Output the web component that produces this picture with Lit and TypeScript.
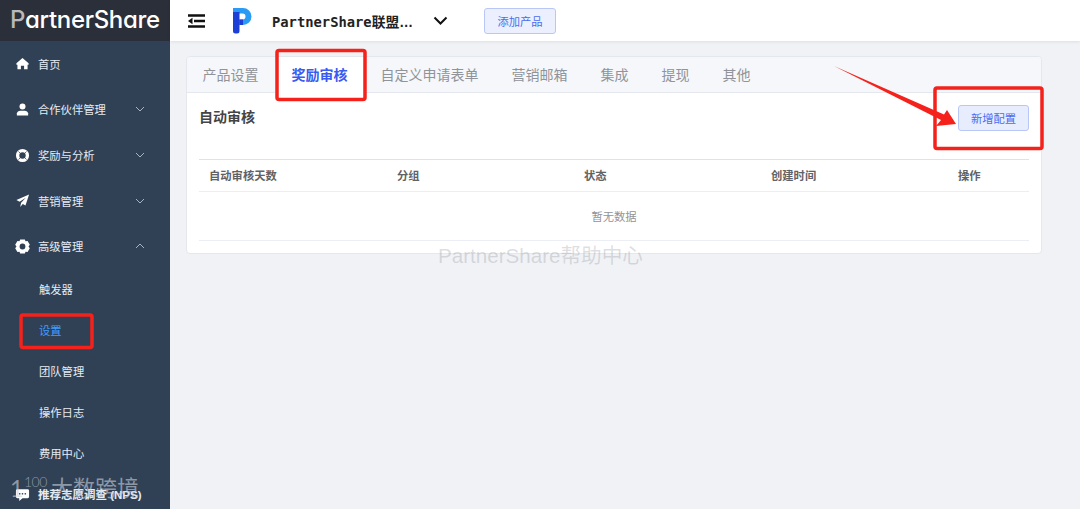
import { LitElement, html, css, svg } from "lit";
import { customElement } from "lit/decorators.js";

const icons: Record<string, unknown> = {
  home: svg`<path d="M8 2.200 1.500 7.800v1.400h1.100v4.800h3.700v-3.600h3.400V14h3.700V9.200h1.100V7.800z" fill="#fff"/>`,
  user: svg`<circle cx="8" cy="4.800" r="3.200" fill="#fff"/><path d="M2 14.500v-2.400C2 10.400 4 9.400 5.600 9.200h4.800c1.600.2 3.600 1.200 3.600 2.900v2.400z" fill="#fff"/>`,
  ring: svg`<circle cx="8" cy="8" r="5.200" fill="none" stroke="#fff" stroke-width="3.600"/><path d="M3.700 3.700l1.800 1.800M12.300 3.700l-1.800 1.800M3.700 12.300l1.800-1.800M12.300 12.300l-1.800-1.800" stroke="#304156" stroke-width=".8"/>`,
  plane: svg`<path d="M15 1.500 1.500 7.500l3.400 1.800L11.500 5 6.500 10.300 5.500 15l2.800-3.300 2.900 1.500z" fill="#fff"/>`,
  gear: svg`<path d="M5.500.5h5l.7 2 2.200-.4 2.400 4-1.400 1.900 1.400 1.900-2.400 4-2.200-.4-.7 2h-5l-.7-2-2.200.4-2.400-4L1.600 8 .2 6.100l2.400-4 2.200.4z" fill="#fff"/><circle cx="8" cy="8" r="3.100" fill="#304156"/>`,
  chat: svg`<path d="M2.500 2.500h11A1.500 1.500 0 0 1 15 4v6.500A1.500 1.500 0 0 1 13.500 12H8l-3.500 3V12h-2A1.500 1.500 0 0 1 1 10.500V4a1.500 1.500 0 0 1 1.500-1.500z" fill="#fff"/><circle cx="5" cy="7.200" r=".9" fill="#304156"/><circle cx="8" cy="7.200" r=".9" fill="#304156"/><circle cx="11" cy="7.200" r=".9" fill="#304156"/>`,
};

@customElement("app-root")
export class AppRoot extends LitElement {
  static styles = css`
    :host {
      display: block;
      position: relative;
      width: 1080px;
      height: 509px;
      overflow: hidden;
      background: #f0f2f5;
      font-family: "Liberation Sans", "Noto Sans CJK SC", sans-serif;
    }
    .app { display: flex; height: 509px; }
    .side { width: 170px; flex: none; background: #304156; overflow: hidden; }
    .logo {
      height: 41px;
      background: #2b2f3a;
      color: #fff;
      font: 500 24px/39px "Inter", sans-serif;
      font-feature-settings: "cv11" 1;
      letter-spacing: -0.3px;
      padding-left: 10px;
      white-space: nowrap;
    }
    .logo b { font-weight: 500; color: #b9b9b9; }
    .item {
      height: 46px;
      display: flex;
      align-items: center;
      padding-left: 15px;
      color: #e6ebf2;
      font-size: 11.3px;
    }
    .item:first-child { height: 45px; }
    .item:nth-child(4), .item:nth-child(5) { height: 45.5px; }
    .item svg.ic { width: 15px; height: 15px; margin-right: 8px; flex: none; }
    .item .lab { flex: 1; white-space: nowrap; }
    .item.nps { height: 44px; font-weight: 700; margin-top: -1px; font-size: 11.5px; }
    .chev { width: 10px; height: 6px; margin-right: 25px; flex: none; }
    .sub {
      height: 41px;
      display: flex;
      align-items: center;
      padding-left: 39px;
      color: #e6ebf2;
      font-size: 11.3px;
    }
    .sub.on { color: #409eff; }
    .sublist { margin-top: -1px; }
    .main { flex: 1; min-width: 0; }
    .top {
      height: 41px;
      background: #fff;
      box-shadow: 0 1px 3px rgba(0, 21, 41, 0.08);
      display: flex;
      align-items: center;
      position: relative;
    }
    .burger { width: 17px; height: 14px; margin-left: 18px; flex: none; }
    .plogo { width: 21px; height: 27px; margin-left: 27px; flex: none; }
    .ttl {
      margin-left: 19px;
      font: 700 13.8px "DejaVu Sans Mono", "Noto Sans CJK SC", monospace;
      color: #222;
      width: 147px;
      white-space: nowrap;
      flex: none;
    }
    .ell { font-family: "Liberation Sans", sans-serif; }
    .dd { width: 15px; height: 9px; margin-left: 14px; flex: none; }
    .add {
      margin-left: 36px;
      width: 72px;
      height: 26px;
      box-sizing: border-box;
      border: 1px solid #b9c7f7;
      border-radius: 3px;
      background: #ecf0fe;
      color: #4a6cf0;
      font-size: 11.3px;
      display: flex;
      align-items: center;
      justify-content: center;
      flex: none;
    }
    .content { padding: 15px 38px 0 16px; }
    .card {
      background: #fff;
      border: 1px solid #e4e7ed;
      border-radius: 4px;
      height: 198px;
      box-sizing: border-box;
    }
    .tabs {
      height: 36px;
      display: flex;
      background: #f5f7fa;
      border-bottom: 1px solid #e4e7ed;
      border-radius: 4px 4px 0 0;
      box-sizing: border-box;
    }
    .tab {
      padding: 0 16.5px;
      font-size: 14px;
      line-height: 36px;
      color: #909399;
      white-space: nowrap;
    }
    .tab:first-child { margin-left: -1px; }
    .tab.on {
      background: #fff;
      color: #3a5bf0;
      font-weight: 700;
      height: 36px;
    }
    .body { padding: 0 12px; }
    .head { height: 66px; display: flex; justify-content: space-between; align-items: flex-start; }
    .h { font-size: 14px; font-weight: 700; color: #444; margin-top: 15px; line-height: 18px; }
    .new {
      width: 71px;
      height: 26px;
      margin-top: 12px;
      box-sizing: border-box;
      border: 1px solid #b9c7f7;
      border-radius: 3px;
      background: #e8edfd;
      color: #4a6cf0;
      font-size: 11.3px;
      display: flex;
      align-items: center;
      justify-content: center;
    }
    .thead {
      display: grid;
      grid-template-columns: 188px repeat(3, 187px) 1fr;
      height: 33px;
      padding-bottom: 1px;
      align-items: center;
      border-top: 1px solid #dfe2e8;
      border-bottom: 1px solid #ebeef5;
      box-sizing: border-box;
      font-size: 11.3px;
      font-weight: 700;
      color: #606266;
    }
    .thead span { padding-left: 10px; }
    .empty {
      height: 49px;
      display: flex;
      align-items: center;
      justify-content: center;
      border-bottom: 1px solid #ebeef5;
      box-sizing: border-box;
      font-size: 11.3px;
      color: #909399;
    }
    .wm1 {
      position: absolute;
      left: 438px;
      top: 244px;
      font-size: 20.6px;
      line-height: 24px;
      color: rgba(120, 125, 135, 0.25);
      white-space: nowrap;
    }
    .wm2 {
      position: absolute;
      left: 10px;
      top: 472px;
      display: flex;
      align-items: flex-start;
      color: rgba(205, 210, 220, 0.6);
      white-space: nowrap;
    }
    .wm2 .one { font: 400 23px/32px "Lato", sans-serif; width: 14px; }
    .wm2 .num { font: 300 14px/14px "Lato", sans-serif; letter-spacing: -0.5px; width: 28px; margin-top: 3px; }
    .wm2 .cn { font-size: 22px; line-height: 34px; margin-left: -1px; }
    .notes { position: absolute; left: 0; top: 0; pointer-events: none; }
  `;

  private chev(up = false) {
    return html`<svg class="chev" viewBox="0 0 10 6"><path d="${up ? "M1 5l4-4 4 4" : "M1 1l4 4 4-4"}" fill="none" stroke="#a9b4c2" stroke-width="1"/></svg>`;
  }

  private item(ic: string, label: string, chev: "" | "d" | "u" = "d", cls = "") {
    return html`<div class="item ${cls}">
      <svg class="ic" viewBox="0 0 16 16">${icons[ic]}</svg>
      <span class="lab">${label}</span>
      ${chev ? this.chev(chev === "u") : ""}
    </div>`;
  }

  render() {
    const tabs = ["产品设置", "奖励审核", "自定义申请表单", "营销邮箱", "集成", "提现", "其他"];
    const cols = ["自动审核天数", "分组", "状态", "创建时间", "操作"];
    const subs = ["触发器", "设置", "团队管理", "操作日志", "费用中心"];
    return html`
      <div class="app">
        <aside class="side">
          <div class="logo"><b>P</b>artnerShare</div>
          <div class="menu">
            ${this.item("home", "首页", "")}
            ${this.item("user", "合作伙伴管理")}
            ${this.item("ring", "奖励与分析")}
            ${this.item("plane", "营销管理")}
            ${this.item("gear", "高级管理", "u")}
            <div class="sublist">
              ${subs.map((s) => html`<div class="sub ${s === "设置" ? "on" : ""}">${s}</div>`)}
            </div>
            ${this.item("chat", "推荐志愿调查 (NPS)", "", "nps")}
          </div>
        </aside>
        <div class="main">
          <header class="top">
            <svg class="burger" viewBox="0 0 17 14">
              <path d="M0 1.500h17M6 7h11M0 12.500h17" stroke="#111" stroke-width="2.400" fill="none"/>
              <path d="M4.500 3.800 0 7l4.500 3.200z" fill="#111"/>
            </svg>
            <svg class="plogo" viewBox="0 0 21 27">
              <path d="M1 1h10a8.500 8.500 0 0 1 0 17H7v-5.500h3.500a3 3 0 0 0 0-6H1z" fill="#2a9bf5"/>
              <path d="M1 5h6.500v19a2.500 2.500 0 0 1-2.500 2.500H3.500A2.500 2.500 0 0 1 1 24z" fill="#1c3fd8"/>
              <path d="M7.500 12.500H11V18H7.500z" fill="#1c3fd8"/>
            </svg>
            <div class="ttl">PartnerShare联盟<span class="ell">…</span></div>
            <svg class="dd" viewBox="0 0 15 9"><path d="M1.500 1.500 7.500 7.500l6-6" fill="none" stroke="#111" stroke-width="2"/></svg>
            <div class="add">添加产品</div>
          </header>
          <div class="content">
            <section class="card">
              <div class="tabs">
                ${tabs.map((t) => html`<div class="tab ${t === "奖励审核" ? "on" : ""}">${t}</div>`)}
              </div>
              <div class="body">
                <div class="head">
                  <div class="h">自动审核</div>
                  <div class="new">新增配置</div>
                </div>
                <div class="thead">${cols.map((c) => html`<span>${c}</span>`)}</div>
                <div class="empty">暂无数据</div>
              </div>
            </section>
          </div>
        </div>
      </div>
      <div class="wm1">PartnerShare帮助中心</div>
      <div class="wm2"><span class="one">1</span><span class="num">100</span><span class="cn">大数跨境</span></div>
      <svg class="notes" width="1080" height="509" viewBox="0 0 1080 509">
        <g fill="none" stroke="#f5211b" stroke-width="3.500" stroke-linejoin="round">
          <rect x="277" y="50.500" width="88" height="49" rx="2"/>
          <rect x="21" y="315" width="71" height="32.500" rx="2"/>
          <rect x="935" y="88" width="107" height="60.500" rx="2"/>
        </g>
        <path d="M834 66 944 114.500 947 110 956 124 936 126 941 120z" fill="#f5211b"/>
      </svg>
    `;
  }
}
